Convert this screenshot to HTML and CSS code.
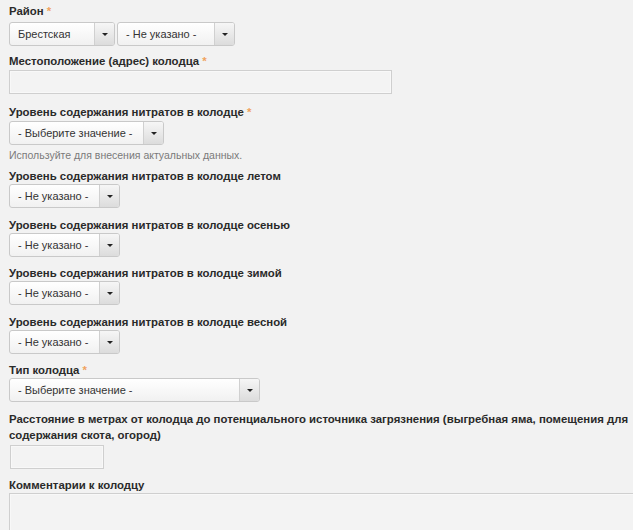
FILE: index.html
```html
<!DOCTYPE html>
<html lang="ru">
<head>
<meta charset="utf-8">
<title>Колодец</title>
<link rel="stylesheet" href="styles.css">
</head>
<body>
<form class="form">
  <div class="field field-region">
    <label class="label">Район <span class="req">*</span></label>
    <div class="row">
      <div class="select w-region"><span class="val">Брестская</span><span class="arrow"></span></div>
      <div class="select w-district"><span class="val">- Не указано -</span><span class="arrow"></span></div>
    </div>
  </div>

  <div class="field field-address">
    <label class="label">Местоположение (адрес) колодца <span class="req">*</span></label>
    <input class="text w-address" type="text">
  </div>

  <div class="field field-nitrate">
    <label class="label">Уровень содержания нитратов в колодце <span class="req">*</span></label>
    <div class="select w-choose"><span class="val">- Выберите значение -</span><span class="arrow"></span></div>
    <div class="help">Используйте для внесения актуальных данных.</div>
  </div>

  <div class="field">
    <label class="label">Уровень содержания нитратов в колодце летом</label>
    <div class="select w-none"><span class="val">- Не указано -</span><span class="arrow"></span></div>
  </div>

  <div class="field">
    <label class="label">Уровень содержания нитратов в колодце осенью</label>
    <div class="select w-none"><span class="val">- Не указано -</span><span class="arrow"></span></div>
  </div>

  <div class="field">
    <label class="label">Уровень содержания нитратов в колодце зимой</label>
    <div class="select w-none"><span class="val">- Не указано -</span><span class="arrow"></span></div>
  </div>

  <div class="field">
    <label class="label">Уровень содержания нитратов в колодце весной</label>
    <div class="select w-none"><span class="val">- Не указано -</span><span class="arrow"></span></div>
  </div>

  <div class="field">
    <label class="label">Тип колодца <span class="req">*</span></label>
    <div class="select w-type"><span class="val">- Выберите значение -</span><span class="arrow"></span></div>
  </div>

  <div class="field field-distance">
    <label class="label">Расстояние в метрах от колодца до потенциального источника загрязнения (выгребная яма, помещения для содержания скота, огород)</label>
    <input class="text w-distance" type="text">
  </div>

  <div class="field">
    <label class="label">Комментарии к колодцу</label>
    <textarea class="area"></textarea>
  </div>
</form>
</body>
</html>
```

FILE: styles.css
```css
html, body {
  margin: 0;
  padding: 0;
  overflow: hidden;
  background: #f2f2f2;
}

body {
  font-family: "Liberation Sans", Arial, sans-serif;
  font-size: 12px;
  color: #333;
}

.form {
  width: 624px;
  padding: 3px 0 0 9px;
}

.field {
  display: flex;
  flex-direction: column;
  align-items: flex-start;
  margin-bottom: 8.5px;
}

.label {
  display: block;
  font-weight: bold;
  font-size: 11.4px;
  line-height: 16px;
  color: #2a2a2a;
}

.req {
  color: #f0a35e;
  font-weight: bold;
}

.row {
  display: flex;
  gap: 2px;
}

.field-region {
  margin-bottom: 7px;
}

.field-region .label {
  margin-bottom: 3px;
}

.field-address {
  margin-bottom: 10px;
}

.field-address .label {
  margin-bottom: 1px;
}

.field-nitrate {
  margin-bottom: 6px;
}

.field-nitrate .label {
  margin-bottom: 1px;
}

.select {
  box-sizing: border-box;
  display: flex;
  align-items: stretch;
  height: 24px;
  border: 1px solid #c9c9c9;
  border-radius: 3px;
  background: linear-gradient(#ffffff, #f1f1f1);
  overflow: hidden;
}

.val {
  flex: 1;
  padding-left: 8px;
  font-size: 11px;
  line-height: 22px;
  color: #333;
  white-space: nowrap;
}

.arrow {
  position: relative;
  width: 19px;
  border-left: 1px solid #d0d0d0;
  background: linear-gradient(#f6f6f6, #dcdcdc);
}

.arrow::after {
  content: "";
  position: absolute;
  left: 50%;
  top: 50%;
  margin-left: -3px;
  margin-top: -1px;
  border-left: 3px solid transparent;
  border-right: 3px solid transparent;
  border-top: 3px solid #222;
}

.w-region { width: 106px; }
.w-district { width: 118px; }
.w-choose { width: 155px; }
.w-none { width: 111px; }
.w-type { width: 251px; }

.help {
  font-size: 10.5px;
  line-height: 14px;
  color: #7a7a7a;
  margin-top: 3px;
}

.text {
  box-sizing: border-box;
  height: 24px;
  margin: 0;
  border: 1px solid #cfcfcf;
  background: #f3f3f3;
  box-shadow: inset 0 0 0 1px #f8f8f8;
  font: inherit;
  padding: 0 6px;
  outline: none;
}

.w-address { width: 383px; }

.w-distance {
  width: 94px;
  margin-left: 1px;
  margin-top: 2px;
}

.area {
  box-sizing: border-box;
  display: block;
  width: 700px;
  height: 120px;
  margin: 0;
  border: 1px solid #cfcfcf;
  background: #f3f3f3;
  box-shadow: inset 0 0 0 1px #f8f8f8;
  resize: none;
  font: inherit;
  outline: none;
}
```
